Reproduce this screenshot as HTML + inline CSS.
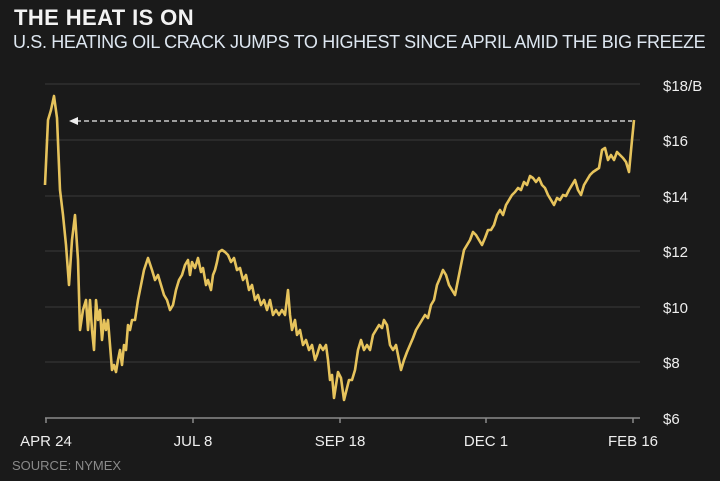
<!DOCTYPE html>
<html><head><style>
body{margin:0;width:720px;height:481px;background:#1a1a1a;overflow:hidden;font-family:"Liberation Sans",sans-serif;position:relative}
.t{position:absolute;left:14px;top:5px;font-size:22px;font-weight:bold;color:#f2f2f2;letter-spacing:0.4px}
.s{position:absolute;left:13px;top:32px;font-size:18px;color:#dde6f0;white-space:nowrap;letter-spacing:-0.35px}
.src{position:absolute;left:12px;top:458px;font-size:13px;color:#8a8a8a}
svg{position:absolute;left:0;top:0}
</style></head><body>
<div class="t">THE HEAT IS ON</div>
<div class="s">U.S. HEATING OIL CRACK JUMPS TO HIGHEST SINCE APRIL AMID THE BIG FREEZE</div>
<svg width="720" height="481">
<g stroke="#3a3a3a" stroke-width="1">
<line x1="45" y1="84" x2="640" y2="84"/><line x1="45" y1="140" x2="640" y2="140"/>
<line x1="45" y1="196" x2="640" y2="196"/><line x1="45" y1="251" x2="640" y2="251"/>
<line x1="45" y1="307" x2="640" y2="307"/><line x1="45" y1="362" x2="640" y2="362"/>
</g>
<g stroke="#8a8a8a" stroke-width="1.5">
<line x1="45" y1="418" x2="640" y2="418"/>
<line x1="46" y1="418" x2="46" y2="423"/><line x1="193" y1="418" x2="193" y2="423"/>
<line x1="340" y1="418" x2="340" y2="423"/><line x1="486" y1="418" x2="486" y2="423"/>
<line x1="633" y1="418" x2="633" y2="423"/>
</g>
<g fill="#eee" font-size="15" font-family="Liberation Sans, sans-serif">
<text x="663" y="91">$18/B</text><text x="663" y="146">$16</text><text x="663" y="202">$14</text>
<text x="663" y="257">$12</text><text x="663" y="313">$10</text><text x="663" y="368">$8</text>
<text x="663" y="424">$6</text>
<text x="46" y="446" text-anchor="middle">APR 24</text><text x="193" y="446" text-anchor="middle">JUL 8</text>
<text x="340" y="446" text-anchor="middle">SEP 18</text><text x="486" y="446" text-anchor="middle">DEC 1</text>
<text x="633" y="446" text-anchor="middle">FEB 16</text>
</g>
<line x1="76" y1="121" x2="632" y2="121" stroke="#eee" stroke-width="1.3" stroke-dasharray="5,3"/>
<polygon points="69,121 78,117 78,125" fill="#eee"/>
<polyline fill="none" stroke="#e6c35c" stroke-width="2.6" stroke-linejoin="round" points="45,185 48,120 51,110 54,96 57,118 60,190 63,215 66,245 69,285 72,240 75,215 78,260 80,330 83,310 86,300 88,330 90,300 92,330 94,350 96,300 98,320 100,310 102,340 104,320 106,330 108,320 110,345 112,370 114,365 116,372 118,360 120,350 122,365 124,345 126,350 128,325 130,330 132,320 135,320 138,300 141,285 144,270 148,258 152,270 155,280 158,275 161,285 164,295 167,300 170,310 173,305 176,290 179,280 182,275 185,265 188,260 190,275 192,262 195,268 198,258 201,272 203,268 206,285 208,280 211,290 213,275 215,270 217,262 219,252 222,250 225,252 228,255 231,262 234,258 237,270 240,268 243,280 246,275 249,290 252,285 255,300 258,295 261,305 264,300 267,310 270,300 273,315 276,310 279,315 282,310 285,315 288,290 290,315 292,330 295,320 297,335 300,330 303,345 306,340 309,350 312,345 315,360 317,355 320,345 323,350 326,345 328,360 330,380 332,375 334,398 336,385 338,372 341,378 344,400 346,392 349,380 352,380 355,370 358,350 361,340 364,350 367,345 370,350 373,335 376,330 379,325 382,328 384,320 387,325 390,345 393,350 396,345 399,360 401,370 404,360 407,352 410,345 413,338 416,330 419,325 422,320 425,315 428,318 431,305 434,300 437,285 440,278 443,270 446,275 449,285 452,290 455,295 458,280 461,265 464,250 467,245 470,240 473,232 476,235 479,240 482,245 485,238 488,230 491,230 494,225 497,215 500,210 503,215 506,205 509,200 512,195 515,192 518,188 521,190 524,182 527,185 530,176 533,178 536,182 539,178 542,185 545,188 548,195 551,200 554,205 557,198 560,200 563,195 566,196 569,190 572,185 575,180 578,190 581,195 584,185 587,180 590,175 593,172 596,170 599,168 602,150 605,148 608,160 611,155 614,160 617,152 620,155 623,158 626,162 629,172 632,140 634,120"/>
</svg>
<div class="src">SOURCE: NYMEX</div>
</body></html>
